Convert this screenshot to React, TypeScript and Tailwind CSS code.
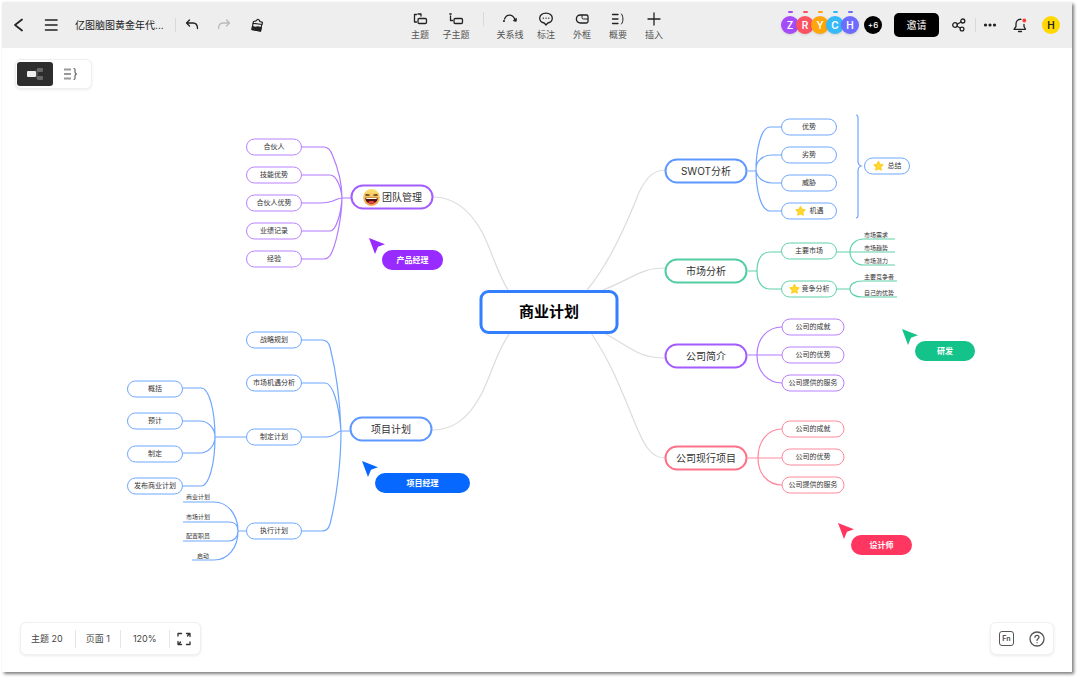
import React from "react";

type Tone = "blue" | "purple" | "green" | "red";
type Mark = "star" | "laugh";

interface TopicData {
  text: string;
  x: number;
  y: number;
  tone: Tone;
  wide?: boolean;
  mark?: Mark;
}

// visible part of the canvas, every node and line below uses these coordinates
const VIEW = { x: 37, y: 105, w: 1000, h: 500 };

const mainBorder: Record<Tone, string> = {
  blue: "border-[#5c98ff]",
  purple: "border-[#a45cff]",
  green: "border-[#52cda2]",
  red: "border-[#ff7188]",
};

const subBorder: Record<Tone, string> = {
  blue: "border-[#6ea6ff]",
  purple: "border-[#b980ff]",
  green: "border-[#5fd2aa]",
  red: "border-[#ff8a9d]",
};

const lineColor: Record<Tone, string> = {
  blue: "stroke-[#6ea6ff]",
  purple: "stroke-[#b27aff]",
  green: "stroke-[#5fd2aa]",
  red: "stroke-[#ff8a9d]",
};

const mainTopics: TopicData[] = [
  { text: "团队管理", x: 392, y: 197, tone: "purple", mark: "laugh" },
  { text: "项目计划", x: 391, y: 429, tone: "blue" },
  { text: "SWOT分析", x: 706, y: 171, tone: "blue" },
  { text: "市场分析", x: 706, y: 271, tone: "green" },
  { text: "公司简介", x: 706, y: 356, tone: "purple" },
  { text: "公司现行项目", x: 706, y: 458, tone: "red" },
];

const subTopics: TopicData[] = [
  { text: "合伙人", x: 274, y: 147, tone: "purple" },
  { text: "技能优势", x: 274, y: 175, tone: "purple" },
  { text: "合伙人优势", x: 274, y: 203, tone: "purple" },
  { text: "业绩记录", x: 274, y: 231, tone: "purple" },
  { text: "经验", x: 274, y: 259, tone: "purple" },
  { text: "战略规划", x: 274, y: 340, tone: "blue" },
  { text: "市场机遇分析", x: 274, y: 383, tone: "blue" },
  { text: "制定计划", x: 274, y: 437, tone: "blue" },
  { text: "执行计划", x: 274, y: 531, tone: "blue" },
  { text: "概括", x: 155, y: 389, tone: "blue" },
  { text: "预计", x: 155, y: 421, tone: "blue" },
  { text: "制定", x: 155, y: 454, tone: "blue" },
  { text: "发布商业计划", x: 155, y: 486, tone: "blue" },
  { text: "优势", x: 809, y: 127, tone: "blue" },
  { text: "劣势", x: 809, y: 155, tone: "blue" },
  { text: "威胁", x: 809, y: 183, tone: "blue" },
  { text: "机遇", x: 809, y: 211, tone: "blue", mark: "star" },
  { text: "主要市场", x: 809, y: 251, tone: "green" },
  { text: "竞争分析", x: 809, y: 289, tone: "green", mark: "star" },
  { text: "公司的成就", x: 813, y: 327, tone: "purple", wide: true },
  { text: "公司的优势", x: 813, y: 355, tone: "purple", wide: true },
  { text: "公司提供的服务", x: 813, y: 383, tone: "purple", wide: true },
  { text: "公司的成就", x: 813, y: 429, tone: "red", wide: true },
  { text: "公司的优势", x: 813, y: 457, tone: "red", wide: true },
  { text: "公司提供的服务", x: 813, y: 485, tone: "red", wide: true },
];

const leaves = [
  { text: "商业计划", x: 198, y: 497 },
  { text: "市场计划", x: 198, y: 517 },
  { text: "配置职员", x: 198, y: 536 },
  { text: "启动", x: 203, y: 556 },
  { text: "市场需求", x: 876, y: 235 },
  { text: "市场趋势", x: 876, y: 248 },
  { text: "市场潜力", x: 876, y: 261 },
  { text: "主要竞争者", x: 879, y: 277 },
  { text: "自己的优势", x: 879, y: 293 },
];

const trunks = [
  "M433 197C455 197 470 210 482 232C492 251 496 270 508 290",
  "M432 430C452 430 468 420 482 393C492 373 497 350 510 333",
  "M665 170C650 170 641 186 636 200C624 230 607 266 587 290",
  "M665 268C640 268 634 278 603 290",
  "M665 358C638 358 632 348 604 333",
  "M665 458C650 458 643 442 637 428C622 392 611 362 591 333",
];

const branches: { tone: Tone; d: string }[] = [
  {
    tone: "purple",
    d: "M351 198H342M301 147H324Q329 147 332 154C338 168 342 184 342 198C342 212 338 238 332 252Q329 259 324 259H301M301 175H330C336 175 341 186 342 198C341 214 336 231 330 231H301M301 203H320C334 203 336 198 342 198",
  },
  {
    tone: "blue",
    d: "M350 431H341M301 340H322Q328 340 330 347C336 371 340 400 341 431C341 460 337 497 330 524Q328 531 322 531H301M301 383H325C333 383 339 405 341 431M301 437H326C335 437 337 431 341 431",
  },
  {
    tone: "blue",
    d: "M246 437H215M183 388H201C209 388 215 410 215 437C215 464 209 486 201 486H183M183 421H200C208 421 215 428 215 437C215 446 208 453 200 453H183",
  },
  {
    tone: "blue",
    d: "M246 531H238M183 502H214C228 502 238 515 238 531C238 548 228 560 214 560H192M183 522H229C234 522 238 525 238 531C238 537 234 541 229 541H183",
  },
  {
    tone: "blue",
    d: "M748 171H756M782 127H770C761 127 756 150 756 170C756 190 761 211 770 211H782M782 155H772C763 155 756 161 756 169C756 177 763 183 772 183H782",
  },
  {
    tone: "blue",
    d: "M856 115Q858 115 858 118V161Q858 165 861 166Q858 167 858 171V215Q858 218 856 218",
  },
  {
    tone: "green",
    d: "M748 271H757M782 252H770C762 252 757 259 757 271C757 282 762 289 770 289H782M837 252H895M895 239H864C856 239 850 244 850 252C850 260 856 265 864 265H895M837 289H850M897 281H862C855 281 850 284 850 289C850 294 855 297 862 297H897",
  },
  {
    tone: "purple",
    d: "M748 355H782M782 327C768 327 757 338 757 355C757 372 768 383 782 383",
  },
  {
    tone: "red",
    d: "M748 458H782M782 429C768 429 758 441 758 458C758 474 768 485 782 485",
  },
];

const visitors = [
  { name: "产品经理", x: 369, y: 238, pill: "bg-[#982bff] w-[61px]", fill: "fill-[#982bff]" },
  { name: "项目经理", x: 362, y: 461, pill: "bg-[#0768ff] w-[95px]", fill: "fill-[#0768ff]" },
  { name: "研发", x: 902, y: 329, pill: "bg-[#14c38a] w-[60px]", fill: "fill-[#14c38a]" },
  { name: "设计师", x: 838, y: 523, pill: "bg-[#ff365f] w-[61px]", fill: "fill-[#ff365f]" },
];

const members = [
  { letter: "Z", color: "bg-[#a54cf8]" },
  { letter: "R", color: "bg-[#fd5261]" },
  { letter: "Y", color: "bg-[#ffa60a]" },
  { letter: "C", color: "bg-[#36b9f8]" },
  { letter: "H", color: "bg-[#6e6bff]" },
];

const at = (x: number, y: number) => ({ left: x - VIEW.x, top: y - VIEW.y });

const Icon: React.FC<{ children: React.ReactNode }> = ({ children }) => (
  <svg
    viewBox="0 0 16 16"
    fill="none"
    stroke="currentColor"
    strokeWidth="1.3"
    strokeLinecap="round"
    strokeLinejoin="round"
    className="size-4 shrink-0"
    aria-hidden="true"
  >
    {children}
  </svg>
);

const Star = () => (
  <svg viewBox="0 0 12 12" className="size-[11px] shrink-0" aria-hidden="true">
    <path
      d="M6 1.200l1.500 3 3.300.5-2.400 2.400.6 3.300L6 8.900l-3 1.500.6-3.300L1.200 4.700l3.300-.5z"
      fill="#ffd92e"
      stroke="#fdcf27"
      strokeWidth="1.400"
      strokeLinejoin="round"
    />
  </svg>
);

const Laugh = () => (
  <svg viewBox="0 0 18 18" className="size-[18px] shrink-0" aria-hidden="true">
    <defs>
      <linearGradient id="face" x1="0" y1="0" x2="0" y2="1">
        <stop offset="0" stopColor="#fde272" />
        <stop offset="1" stopColor="#f09c48" />
      </linearGradient>
    </defs>
    <circle cx="9" cy="9" r="8.400" fill="url(#face)" />
    <path d="M3 5.800l4 .8-4 .4M15 5.800l-4 .8 4 .4" fill="none" stroke="#4a2a12" strokeWidth=".8" />
    <path d="M2.800 9.300h12.400c0 3.500-2.600 6-6.200 6s-6.200-2.500-6.200-6z" fill="#4a120e" />
    <path d="M3.600 9.500h10.800l-.3.900H3.900z" fill="#fff" />
    <path d="M5.500 13.600c1.700-1.600 5.300-1.600 7 0-1.900 2-5.100 2-7 0z" fill="#f0414f" />
  </svg>
);

const tools = [
  {
    label: "主题",
    icon: (
      <>
        <path d="M4.500 11H2.500V3.500M2.500 3.500H4.500M6 3H9v2" />
        <rect x="6" y="7.500" width="8.500" height="5" rx="1.200" />
      </>
    ),
  },
  {
    label: "子主题",
    icon: (
      <>
        <path d="M2.500 5V9.500H4.500M1.800 3h1.400" />
        <rect x="6" y="7.500" width="8.500" height="5" rx="1.200" />
      </>
    ),
  },
  {
    label: "关系线",
    icon: (
      <>
        <path d="M2.500 8C4.500 3 10.500 2.500 13 8.500" />
        <path d="M11.800 9.500l2.200.5.200-2.300z" fill="currentColor" />
        <circle cx="2" cy="10" r=".4" fill="currentColor" />
      </>
    ),
  },
  {
    label: "标注",
    icon: (
      <>
        <path d="M8 2.200c3.600 0 6.300 2.100 6.300 5 0 2.700-1.800 4.300-4.500 4.800L8 14l-1.800-2c-2.700-.5-4.500-2.100-4.500-4.800 0-2.900 2.700-5 6.300-5z" />
        <path d="M5.300 7.200h.1M8 7.200h.1M10.700 7.200h.1" />
      </>
    ),
  },
  {
    label: "外框",
    icon: (
      <>
        <path d="M6.500 4H12.500q1.500 0 1.500 1.500V10.500q0 1.500-1.500 1.500H6.500C1 12 1 4 6.500 4z" />
        <path d="M8 4v2.500q0 1.500 1.500 1.500H13.500" strokeWidth="1" />
      </>
    ),
  },
  {
    label: "概要",
    icon: (
      <>
        <path d="M2.500 3.500h5.500M2.500 8h5.500M2.500 12.500h5.500" />
        <path d="M11.500 3c2 2.500 2 7.500 0 10" strokeWidth="1" />
      </>
    ),
  },
  { label: "插入", icon: <path d="M8 2v12M2 8h12" /> },
];

const Divider = () => <span className="h-3.5 w-px shrink-0 bg-[#d9d9d9]" />;

const Topic: React.FC<{ topic: TopicData; main?: boolean }> = ({ topic, main }) => {
  const size = main
    ? "h-[25px] w-[83px] border-2 text-[10px] gap-0.5"
    : topic.wide
      ? "h-[17px] w-[63px] border text-[7px]"
      : "h-[17px] w-[56px] border text-[7px]";
  const gap = topic.text.length > 2 ? "gap-0.5" : "gap-1";
  const color = main ? mainBorder[topic.tone] : subBorder[topic.tone];
  return (
    <div
      className={`absolute flex -translate-x-1/2 -translate-y-1/2 items-center justify-center rounded-full bg-white whitespace-nowrap text-[#333] ${size} ${main ? "" : gap} ${color}`}
      style={at(topic.x, topic.y)}
    >
      {topic.mark === "star" && <Star />}
      {topic.mark === "laugh" && <Laugh />}
      {topic.text}
    </div>
  );
};

const Header = () => (
  <header className="grid h-[46px] shrink-0 grid-cols-[1fr_auto_1fr] items-center bg-[#eeeeee] px-2 text-[#222]">
    <div className="flex items-center">
      <button type="button" aria-label="返回">
        <Icon>
          <path d="M12 2.500L5 8l7 5.500" strokeWidth="1.700" />
        </Icon>
      </button>
      <button type="button" aria-label="菜单" className="ml-[17px]">
        <Icon>
          <path d="M2.500 3h11.500M2.500 8h11.500M2.500 13h11.500" strokeWidth="1.600" />
        </Icon>
      </button>
      <span className="ml-4 w-[94px] text-[10px] whitespace-nowrap">亿图脑图黄金年代...</span>
      <span className="ml-1.5 flex">
        <Divider />
      </span>
      <button type="button" aria-label="撤销" className="ml-2">
        <Icon>
          <path d="M5.500 3L2.500 6l3 3M2.500 6H9c3 0 4.500 2 4.500 5.500" />
        </Icon>
      </button>
      <button type="button" aria-label="重做" className="ml-4 text-[#b9b9b9]">
        <Icon>
          <path d="M10.500 3l3 3-3 3M13.500 6H7c-3 0-4.500 2-4.500 5.500" />
        </Icon>
      </button>
      <button type="button" aria-label="格式刷" className="ml-[17px]">
        <Icon>
          <path d="M4.500 4.500L7 3.800l1.500-1.500 2 1 .3 1.200 2.700.8-.5 2.200-9-1.200z" strokeWidth="1.200" />
          <path d="M4 6.500L3 12.500l8.500 1.500 1.200-6" strokeWidth="1.200" />
          <path d="M3.500 9.500l2.500.8 3-.4 3.200.8-.7 3.300-8.500-1.500z" fill="currentColor" />
        </Icon>
      </button>
    </div>

    <nav className="flex items-center pt-1">
      {tools.map((tool, i) => (
        <React.Fragment key={tool.label}>
          {i === 2 && (
            <span className="flex w-[18px] justify-center pb-4">
              <Divider />
            </span>
          )}
          <button type="button" className="flex w-9 flex-col items-center text-[9px] leading-4 whitespace-nowrap text-[#555]">
            <span className="text-[#222]">
              <Icon>{tool.icon}</Icon>
            </span>
            {tool.label}
          </button>
        </React.Fragment>
      ))}
    </nav>

    <div className="flex items-center justify-end pr-1">
      <div className="flex">
        {members.map((m) => (
          <span
            key={m.letter}
            className={`relative -mr-[3px] flex size-[18px] items-center justify-center rounded-full text-[10px] font-semibold text-white shadow-sm ${m.color}`}
          >
            <i className={`absolute -top-[5px] h-0.5 w-[5px] rounded-full ${m.color}`} />
            {m.letter}
          </span>
        ))}
      </div>
      <span className="ml-2 flex size-[18px] items-center justify-center rounded-full bg-black text-[8px] font-medium text-white">
        +6
      </span>
      <button type="button" className="ml-3 h-6 w-[45px] rounded-[5px] bg-black text-[10px] text-white">
        邀请
      </button>
      <button type="button" aria-label="分享" className="ml-3">
        <Icon>
          <circle cx="4" cy="8" r="2.300" />
          <circle cx="11.800" cy="4" r="2" />
          <circle cx="11" cy="12" r="1.900" />
          <path d="M6.200 7.200L10 5M6 9.200l3.300 1.800" />
        </Icon>
      </button>
      <span className="ml-2 flex">
        <Divider />
      </span>
      <button type="button" aria-label="更多" className="ml-1.5">
        <Icon>
          <path d="M3.500 8h.01M8 8h.01M12.500 8h.01" strokeWidth="3.200" />
        </Icon>
      </button>
      <button type="button" aria-label="通知" className="ml-3.5">
        <Icon>
          <path d="M9 2.300C5.500 2 4 4.500 4 7v2.500L2 12.300h11.500L12 9.500V7.500M6.500 14.500h3" />
          <circle cx="12.300" cy="3.500" r="1.900" fill="#ff3b30" stroke="none" />
        </Icon>
      </button>
      <span className="ml-3.5 flex size-[18px] items-center justify-center rounded-full bg-[#ffd800] text-[10px] font-semibold text-[#222]">
        H
      </span>
    </div>
  </header>
);

const MindMap = () => (
  <div className="relative mx-auto mt-4 h-[500px] w-[1000px] shrink-0">
    <svg viewBox={`${VIEW.x} ${VIEW.y} ${VIEW.w} ${VIEW.h}`} fill="none" className="h-full w-full" aria-hidden="true">
      {trunks.map((d) => (
        <path key={d} d={d} strokeWidth="1.200" className="stroke-[#dcdcdc]" />
      ))}
      {branches.map((b) => (
        <path key={b.d} d={b.d} strokeWidth="1.200" className={lineColor[b.tone]} />
      ))}
    </svg>

    {mainTopics.map((t) => (
      <Topic key={t.text} topic={t} main />
    ))}
    {subTopics.map((t) => (
      <Topic key={`${t.text}-${t.x}-${t.y}`} topic={t} />
    ))}
    {leaves.map((l) => (
      <span
        key={l.text}
        className="absolute -translate-x-1/2 -translate-y-1/2 text-[6px] leading-none whitespace-nowrap text-[#333]"
        style={at(l.x, l.y)}
      >
        {l.text}
      </span>
    ))}

    <div
      className="absolute flex h-[17px] w-[46px] -translate-x-1/2 -translate-y-1/2 items-center justify-center gap-1 rounded-full border border-[#6ea6ff] bg-white text-[7px] text-[#333]"
      style={at(887, 166)}
    >
      <Star />
      总结
    </div>

    <h1
      className="absolute flex h-[44px] w-[139px] -translate-x-1/2 -translate-y-1/2 items-center justify-center rounded-[9px] border-3 border-[#347fff] bg-white text-[15px] font-bold text-black"
      style={at(549, 312)}
    >
      商业计划
    </h1>

    {visitors.map((v) => (
      <div key={v.name} className="absolute" style={at(v.x, v.y)}>
        <svg viewBox="0 0 16 16" className={`block size-4 ${v.fill}`} aria-hidden="true">
          <path d="M0 0L16 6.300L9 8.800L6 16z" />
        </svg>
        <div
          className={`-mt-1 ml-[13px] flex h-5 items-center justify-center rounded-full text-[8px] font-bold text-white ${v.pill}`}
        >
          {v.name}
        </div>
      </div>
    ))}
  </div>
);

const card = "flex items-center rounded-md border border-[#f0f0f0] bg-white shadow-[0_1px_3px_rgba(0,0,0,0.08)]";

const App: React.FC = () => {
  return (
    <div
      lang="zh-CN"
      className="flex min-h-screen flex-col bg-white pt-0.5 pr-2 pb-[9px] pl-0.5 font-['Inter','Noto_Sans_CJK_SC',sans-serif]"
    >
      <div className="flex flex-1 flex-col bg-white shadow-[2px_2px_3px_rgba(0,0,0,0.5)]">
        <Header />
        <main className="flex flex-1 flex-col overflow-hidden pt-[11px] pb-[17px]">
          <div className={`ml-[13px] h-[30px] w-[77px] shrink-0 px-px ${card}`}>
            <button
              type="button"
              aria-label="思维导图"
              className="flex h-6 w-9 items-center justify-center rounded-[3px] bg-[#2e2e2e]"
            >
              <svg viewBox="0 0 18 14" className="h-3.5 w-[18px]" aria-hidden="true">
                <path d="M9 7H11V2.500H13M11 7v4.500H13" fill="none" stroke="#666" />
                <rect x="11" y="1" width="6" height="4" rx="1" fill="#666" />
                <rect x="11" y="9" width="6" height="4" rx="1" fill="#666" />
                <rect x="1" y="4" width="9" height="6" rx="1" fill="#eee" />
              </svg>
            </button>
            <button type="button" aria-label="大纲" className="flex h-6 w-9 items-center justify-center text-[#666]">
              <svg viewBox="0 0 16 14" fill="none" stroke="currentColor" className="h-3.5 w-4" aria-hidden="true">
                <path d="M1 2.500h7M1 7h7M1 11.500h7" stroke="#999" strokeWidth="2" />
                <path d="M10.500 1.500c2 0 1.500 1.500 1.500 3 0 1.300.5 2.500 2 2.500-1.500 0-2 1.200-2 2.500 0 1.500.5 3-1.500 3" strokeWidth="1.200" />
              </svg>
            </button>
          </div>

          <MindMap />

          <footer className="mt-auto flex justify-between px-[18px]">
            <div className={`h-[33px] pr-2 pl-2.5 text-[9px] text-[#444] ${card}`}>
              <span className="pr-3">主题 20</span>
              <span className="h-[18px] w-px bg-[#e6e6e6]" />
              <span className="px-2.5">页面 1</span>
              <span className="h-[18px] w-px bg-[#e6e6e6]" />
              <span className="px-3">120%</span>
              <span className="h-[18px] w-px bg-[#e6e6e6]" />
              <button type="button" aria-label="全屏" className="ml-1.5 text-[#333]">
                <Icon>
                  <path d="M2 5V2.500H5.500M14 11v2.500H10.500" />
                  <path d="M10.500 2.500H14V5.500M11.500 5L13.500 2.500M5.500 13.500H2V10.500M4.500 11L2.500 13.500" />
                </Icon>
              </button>
            </div>
            <div className={`h-[33px] gap-[15px] px-2 text-[#555] ${card}`}>
              <button
                type="button"
                className="flex size-[15px] items-center justify-center rounded-[3px] border border-[#555] text-[7px] leading-none font-bold"
              >
                Fn
              </button>
              <button type="button" aria-label="帮助">
                <Icon>
                  <circle cx="8" cy="8" r="7" />
                  <path d="M6 6.300C6 3.700 10 3.700 10 6.300 10 7.800 8 7.800 8 9.400M8 11.600v.1" />
                </Icon>
              </button>
            </div>
          </footer>
        </main>
      </div>
    </div>
  );
};

export default App;
